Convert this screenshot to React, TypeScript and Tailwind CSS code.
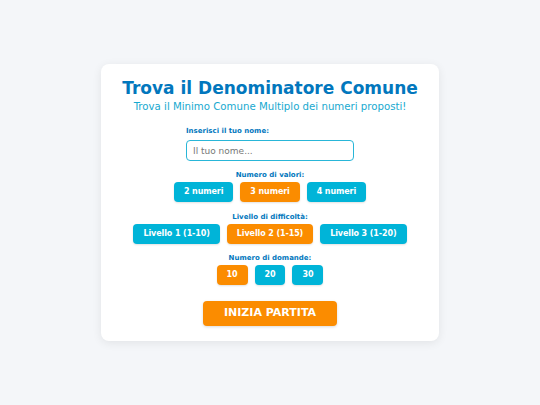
import { useState } from "react";

const FONT = "font-['DejaVu_Sans',Verdana,sans-serif]";

type Opt = { label: string; value: number };

const valori: Opt[] = [
  { label: "2 numeri", value: 2 },
  { label: "3 numeri", value: 3 },
  { label: "4 numeri", value: 4 },
];

const livelli: Opt[] = [
  { label: "Livello 1 (1-10)", value: 1 },
  { label: "Livello 2 (1-15)", value: 2 },
  { label: "Livello 3 (1-20)", value: 3 },
];

const domande: Opt[] = [
  { label: "10", value: 10 },
  { label: "20", value: 20 },
  { label: "30", value: 30 },
];

function OptionRow({
  title,
  options,
  selected,
  onPick,
}: {
  title: string;
  options: Opt[];
  selected: number;
  onPick: (v: number) => void;
}) {
  return (
    <div className="flex flex-col items-center">
      <span className="text-[7px] font-bold text-[#0277bd] leading-none mb-[3px]">{title}</span>
      <div className="flex gap-[7px]">
        {options.map((o) => (
          <button
            key={o.value}
            onClick={() => onPick(o.value)}
            className={`h-[20px] px-[10px] rounded-[4px] text-[8px] font-bold text-white tracking-[-0.1px] shadow-[0_1px_2px_rgba(0,0,0,0.12)] ${
              o.value === selected ? "bg-[#fb8c00]" : "bg-[#00b4d8]"
            }`}
          >
            {o.label}
          </button>
        ))}
      </div>
    </div>
  );
}

export default function App() {
  const [nome, setNome] = useState("");
  const [numVal, setNumVal] = useState(3);
  const [livello, setLivello] = useState(2);
  const [numDom, setNumDom] = useState(10);

  return (
    <div className={`min-h-screen w-full bg-[#f4f6f9] flex justify-center pt-[64px] ${FONT}`}>
      <div className="w-[338px] h-[277px] bg-white rounded-[8px] shadow-[0_2px_10px_rgba(0,0,0,0.08)] flex flex-col items-center pt-[14px]">
        <h1 className="text-[17px] font-bold text-[#0277bd] leading-tight">Trova il Denominatore Comune</h1>
        <p className="text-[10.2px] text-[#17a9cf] leading-tight mt-[2px]">
          Trova il Minimo Comune Multiplo dei numeri proposti!
        </p>

        <div className="flex flex-col w-[168px] mt-[14px]">
          <label className="text-[7px] font-bold text-[#0277bd] leading-none mb-[5px]">Inserisci il tuo nome:</label>
          <input
            value={nome}
            onChange={(e) => setNome(e.target.value)}
            placeholder="Il tuo nome..."
            className="h-[21px] border border-[#29b6d8] rounded-[4px] px-[6px] text-[9px] text-[#333] placeholder:text-[#777] outline-none"
          />
        </div>

        <div className="flex flex-col items-center gap-[11.5px] mt-[11px]">
          <OptionRow title="Numero di valori:" options={valori} selected={numVal} onPick={setNumVal} />
          <OptionRow title="Livello di difficoltà:" options={livelli} selected={livello} onPick={setLivello} />
          <OptionRow title="Numero di domande:" options={domande} selected={numDom} onPick={setNumDom} />
        </div>

        <button className="mt-[16px] w-[134px] h-[25px] rounded-[4px] bg-[#fb8c00] text-white text-[11px] font-bold shadow-[0_1px_3px_rgba(0,0,0,0.15)]">
          INIZIA PARTITA
        </button>
      </div>
    </div>
  );
}
